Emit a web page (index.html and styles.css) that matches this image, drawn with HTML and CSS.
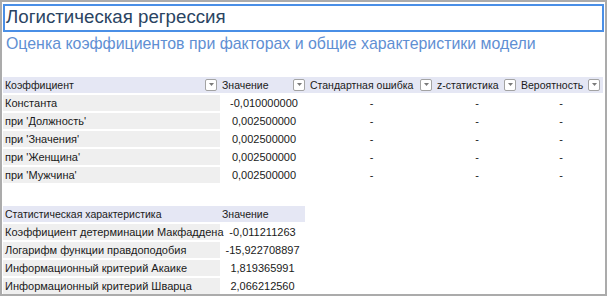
FILE: index.html
```html
<!DOCTYPE html>
<html lang="ru">
<head>
<meta charset="utf-8">
<title>Логистическая регрессия</title>
<link rel="stylesheet" href="styles.css">
</head>
<body>
<div class="frame">
  <div class="title-box"><span class="title">Логистическая регрессия</span></div>
  <div class="subtitle">Оценка коэффициентов при факторах и общие характеристики модели</div>

  <div class="grid coef">
    <div class="hcell"><span>Коэффициент</span><span class="dd"><svg width="5" height="3" viewBox="0 0 5 3"><path d="M0 0h5L2.5 3z" fill="#7a7a7a"/></svg></span></div>
    <div class="hcell"><span>Значение</span><span class="dd"><svg width="5" height="3" viewBox="0 0 5 3"><path d="M0 0h5L2.5 3z" fill="#7a7a7a"/></svg></span></div>
    <div class="hcell"><span>Стандартная ошибка</span><span class="dd"><svg width="5" height="3" viewBox="0 0 5 3"><path d="M0 0h5L2.5 3z" fill="#7a7a7a"/></svg></span></div>
    <div class="hcell"><span>z-статистика</span><span class="dd"><svg width="5" height="3" viewBox="0 0 5 3"><path d="M0 0h5L2.5 3z" fill="#7a7a7a"/></svg></span></div>
    <div class="hcell"><span>Вероятность</span><span class="dd"><svg width="5" height="3" viewBox="0 0 5 3"><path d="M0 0h5L2.5 3z" fill="#7a7a7a"/></svg></span></div>

    <div class="lcell">Константа</div><div class="vcell">-0,010000000</div><div class="vcell">-</div><div class="vcell">-</div><div class="vcell">-</div>
    <div class="lcell">при 'Должность'</div><div class="vcell">0,002500000</div><div class="vcell">-</div><div class="vcell">-</div><div class="vcell">-</div>
    <div class="lcell">при 'Значения'</div><div class="vcell">0,002500000</div><div class="vcell">-</div><div class="vcell">-</div><div class="vcell">-</div>
    <div class="lcell">при 'Женщина'</div><div class="vcell">0,002500000</div><div class="vcell">-</div><div class="vcell">-</div><div class="vcell">-</div>
    <div class="lcell">при 'Мужчина'</div><div class="vcell">0,002500000</div><div class="vcell">-</div><div class="vcell">-</div><div class="vcell">-</div>
  </div>

  <div class="grid stats">
    <div class="hcell">Статистическая характеристика</div>
    <div class="hcell">Значение</div>
    <div class="lcell">Коэффициент детерминации Макфаддена</div><div class="vcell">-0,011211263</div>
    <div class="lcell">Логарифм функции правдоподобия</div><div class="vcell">-15,922708897</div>
    <div class="lcell">Информационный критерий Акаике</div><div class="vcell">1,819365991</div>
    <div class="lcell">Информационный критерий Шварца</div><div class="vcell">2,066212560</div>
  </div>
</div>
</body>
</html>
```

FILE: styles.css
```css
html, body {
  margin: 0;
  padding: 0;
  background: #ffffff;
}

.frame {
  box-sizing: border-box;
  width: 607px;
  height: 296px;
  border: 2px solid #ababab;
  padding: 2px 1px 0 1px;
  background: #ffffff;
  font-family: "Liberation Sans", Arial, sans-serif;
  overflow: hidden;
}

.title-box {
  box-sizing: border-box;
  height: 28px;
  border: 2px solid #4a8fe6;
  padding: 0 0 0 1px;
}

.title {
  display: block;
  font-size: 18.7px;
  line-height: 22px;
  color: #2a4462;
}

.subtitle {
  margin-top: 2px;
  padding-left: 3px;
  font-size: 15.9px;
  line-height: 20px;
  color: #5f8fd3;
}

.grid {
  display: grid;
  row-gap: 2px;
  font-size: 11px;
  line-height: 16px;
  color: #1a1a1a;
}

.coef {
  margin-top: 23px;
  grid-template-columns: 217px 88px 127px 84px 84px;
  grid-auto-rows: 16px;
}

.stats {
  margin-top: 23px;
  grid-template-columns: 217px 85px;
  grid-auto-rows: 16px;
}

.hcell {
  background: #e5e7f4;
  padding-left: 2px;
  padding-right: 3px;
  display: flex;
  align-items: center;
  justify-content: space-between;
  white-space: nowrap;
  overflow: hidden;
  font-size: 10.5px;
}

.lcell {
  background: #efefef;
  padding-left: 2px;
  white-space: nowrap;
  font-size: 11px;
}

.vcell {
  text-align: center;
  white-space: nowrap;
}

.dd {
  box-sizing: border-box;
  width: 12px;
  height: 12px;
  flex: none;
  border: 1px solid #a3a3a3;
  border-radius: 2px;
  background: #ffffff;
  display: flex;
  align-items: center;
  justify-content: center;
  padding-bottom: 2px;
}

.dd svg {
  display: block;
}
```
